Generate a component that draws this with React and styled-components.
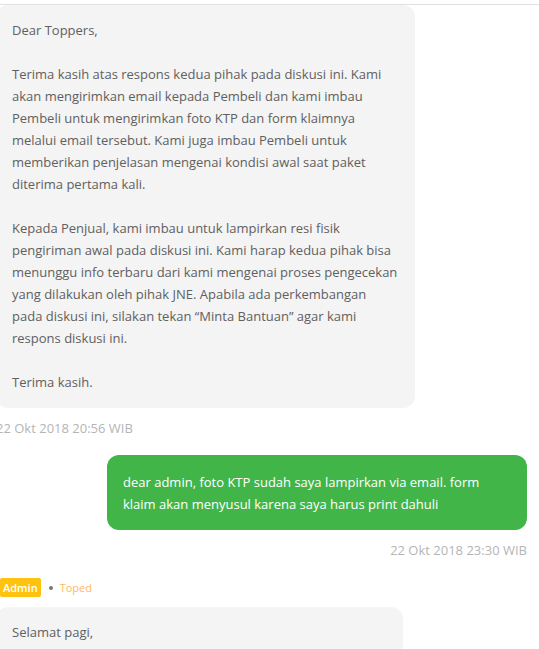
import styled, { createGlobalStyle } from "styled-components";

const GlobalStyle = createGlobalStyle`
  body {
    margin: 0;
    background: #fff;
    font-family: "Open Sans", "Noto Sans", sans-serif;
    overflow: hidden;
  }
`;

const TopBar = styled.div`
  height: 4px;
  border-bottom: 1px solid #e0e0e0;
`;

const Thread = styled.div`
  margin-left: -4px;
  width: 531px;
  display: flex;
  flex-direction: column;
`;

const Message = styled.div`
  display: flex;
  flex-direction: column;
  align-items: ${(p) => (p.$mine ? "flex-end" : "flex-start")};
  margin-bottom: ${(p) => p.$gap || 0}px;
`;

const Bubble = styled.div`
  box-sizing: border-box;
  width: ${(p) => p.$width}px;
  padding: ${(p) => (p.$mine ? "16px" : "14px")} 16px 15px 16px;
  border-radius: 12px;
  background: ${(p) => (p.$mine ? "#42b549" : "#f4f4f4")};
  color: ${(p) => (p.$mine ? "#fff" : "#606060")};
  font-size: 13px;
  line-height: 22px;

  p {
    margin: 0 0 22px 0;
  }
  p:last-child {
    margin-bottom: 0;
  }
`;

const Time = styled.div`
  margin-top: 12px;
  font-size: 13px;
  line-height: 17px;
  color: #b5b5b5;
`;

const Sender = styled.div`
  display: flex;
  align-items: center;
  gap: 6px;
  margin-left: 4px;
  margin-bottom: 10px;
  font-size: 11px;
`;

const Badge = styled.span`
  display: inline-block;
  height: 19px;
  line-height: 19px;
  background: #ffc20e;
  color: #fff;
  padding: 0 3px;
  border-radius: 2px;
  font-weight: 600;
`;

const Dot = styled.span`
  width: 4px;
  height: 4px;
  border-radius: 50%;
  background: #777;
  margin: 0 1px 0 2px;
`;

const SenderName = styled.span`
  color: #ffb95e;
`;

const App = () => {
  return (
    <>
      <GlobalStyle />
      <TopBar />
      <Thread>
        <Message $gap={18}>
          <Bubble $width={419}>
            <p>Dear Toppers,</p>
            <p>
              Terima kasih atas respons kedua pihak pada diskusi ini. Kami akan
              mengirimkan email kepada Pembeli dan kami imbau Pembeli untuk
              mengirimkan foto KTP dan form klaimnya melalui email tersebut. Kami
              juga imbau Pembeli untuk memberikan penjelasan mengenai kondisi
              awal saat paket diterima pertama kali.
            </p>
            <p>
              Kepada Penjual, kami imbau untuk lampirkan resi fisik pengiriman
              awal pada diskusi ini. Kami harap kedua pihak bisa menunggu info
              terbaru dari kami mengenai proses pengecekan yang dilakukan oleh
              pihak JNE. Apabila ada perkembangan pada diskusi ini, silakan tekan
              “Minta Bantuan” agar kami respons diskusi ini.
            </p>
            <p>Terima kasih.</p>
          </Bubble>
          <Time>22 Okt 2018 20:56 WIB</Time>
        </Message>
        <Message $mine $gap={19}>
          <Bubble $mine $width={420}>
            dear admin, foto KTP sudah saya lampirkan via email. form klaim akan
            menyusul karena saya harus print dahuli
          </Bubble>
          <Time>22 Okt 2018 23:30 WIB</Time>
        </Message>
        <Sender>
          <Badge>Admin</Badge>
          <Dot />
          <SenderName>Toped</SenderName>
        </Sender>
        <Message>
          <Bubble $width={407}>
            <p>Selamat pagi,</p>
          </Bubble>
        </Message>
      </Thread>
    </>
  );
};

export default App;
